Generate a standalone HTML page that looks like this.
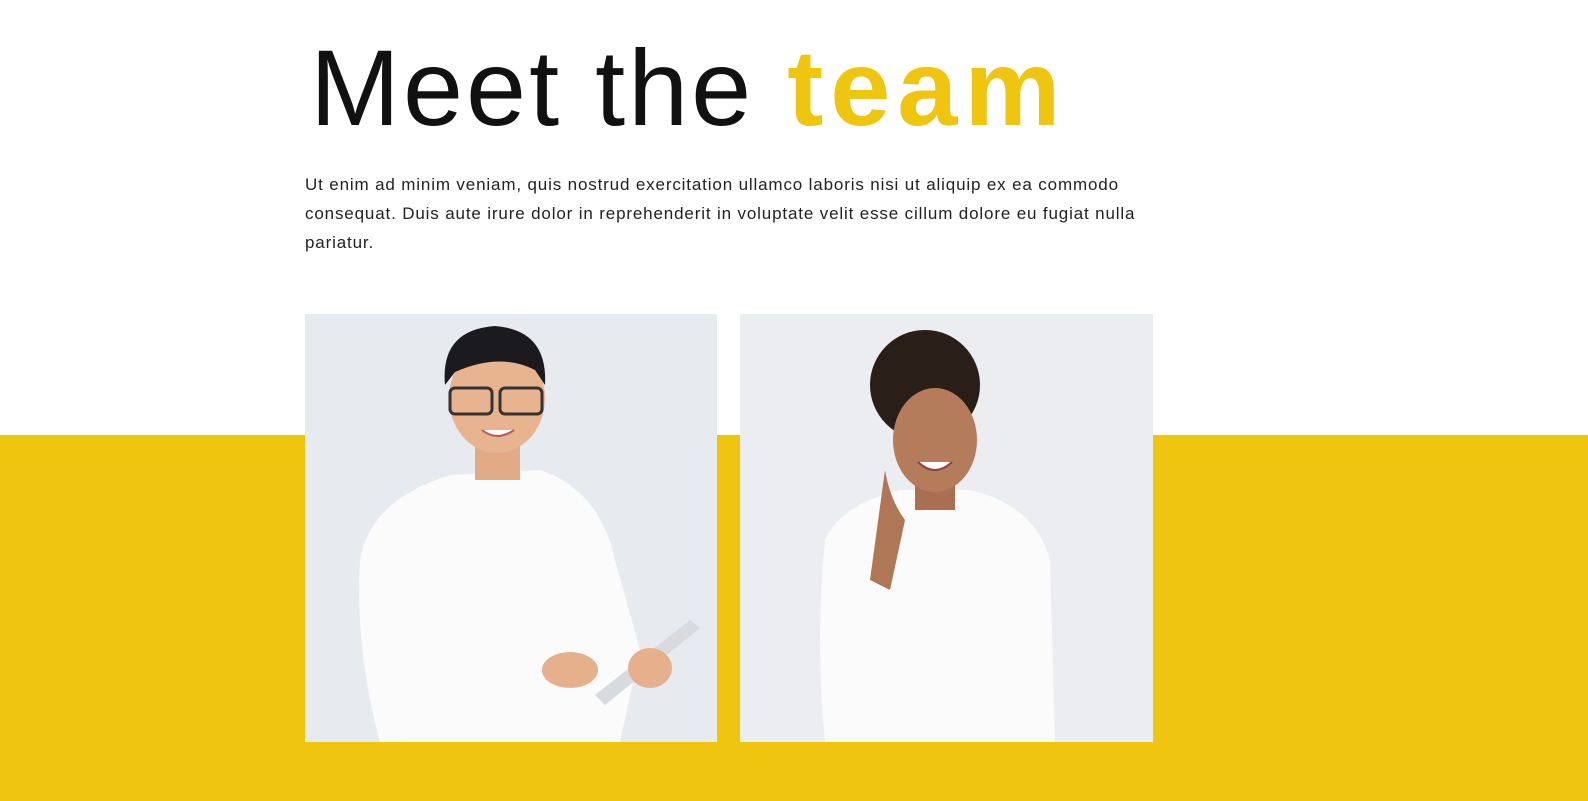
<!DOCTYPE html>
<html><head><meta charset="utf-8"><style>
html,body{margin:0;padding:0;width:1588px;height:801px;overflow:hidden;background:#fff;font-family:"Liberation Sans",sans-serif}
.band{position:absolute;left:0;top:435px;width:1588px;height:366px;background:#f0c50f}
h1{position:absolute;left:310px;top:34px;margin:0;font-size:108px;line-height:108px;font-weight:normal;color:#111;white-space:nowrap;letter-spacing:3px}
h1 b{color:#f0c50f;letter-spacing:7px}
p{position:absolute;left:305px;top:170px;margin:0;font-size:17px;line-height:29px;color:#222;white-space:nowrap;letter-spacing:0.85px}
svg{position:absolute;left:0;top:0}
</style></head><body>
<div class="band"></div>
<h1>Meet the <b>team</b></h1>
<p>Ut enim ad minim veniam, quis nostrud exercitation ullamco laboris nisi ut aliquip ex ea commodo<br>consequat. Duis aute irure dolor in reprehenderit in voluptate velit esse cillum dolore eu fugiat nulla<br>pariatur.</p>
<svg width="1588" height="801">
<defs><clipPath id="c1"><rect x="305" y="314" width="412" height="428"/></clipPath><clipPath id="c2"><rect x="740" y="314" width="413" height="428"/></clipPath></defs>
<rect x="305" y="314" width="412" height="428" fill="#e7eaef"/>
<g clip-path="url(#c1)">
<path d="M360 560 Q370 500 450 475 L540 470 Q600 490 615 560 L640 650 L620 742 L380 742 Q355 650 360 560Z" fill="#fbfbfc"/>
<rect x="475" y="440" width="45" height="40" fill="#e2ab86"/>
<ellipse cx="497" cy="398" rx="48" ry="55" fill="#e8b38f"/>
<path d="M445 385 Q440 330 495 326 Q548 330 545 385 L535 370 Q500 352 455 372Z" fill="#1b1b1f"/>
<rect x="450" y="388" width="42" height="26" rx="5" fill="none" stroke="#333" stroke-width="3"/>
<rect x="500" y="388" width="42" height="26" rx="5" fill="none" stroke="#333" stroke-width="3"/>
<path d="M482 430 Q497 442 514 430" fill="#fff" stroke="#b56" stroke-width="2"/>
<path d="M595 695 L690 620 L700 628 L605 705Z" fill="#d8dadd"/>
<ellipse cx="570" cy="670" rx="28" ry="18" fill="#e6b08c"/>
<ellipse cx="650" cy="668" rx="22" ry="20" fill="#e6b08c"/>
</g>
<rect x="740" y="314" width="413" height="428" fill="#ebedf0"/>
<g clip-path="url(#c2)">
<path d="M825 540 Q840 505 900 490 L970 490 Q1035 505 1050 560 L1055 742 L825 742 Q815 640 825 540Z" fill="#fbfbfb"/>
<rect x="915" y="470" width="40" height="40" fill="#a86f50"/>
<circle cx="925" cy="385" r="55" fill="#2a1e18"/>
<ellipse cx="935" cy="440" rx="42" ry="52" fill="#b57c5c"/>
<path d="M918 462 Q935 478 952 462" fill="#fff" stroke="#844" stroke-width="2"/>
<path d="M885 470 Q890 500 905 520 L890 590 L870 580 Z" fill="#b07757"/>
</g>
</svg>
</body></html>
